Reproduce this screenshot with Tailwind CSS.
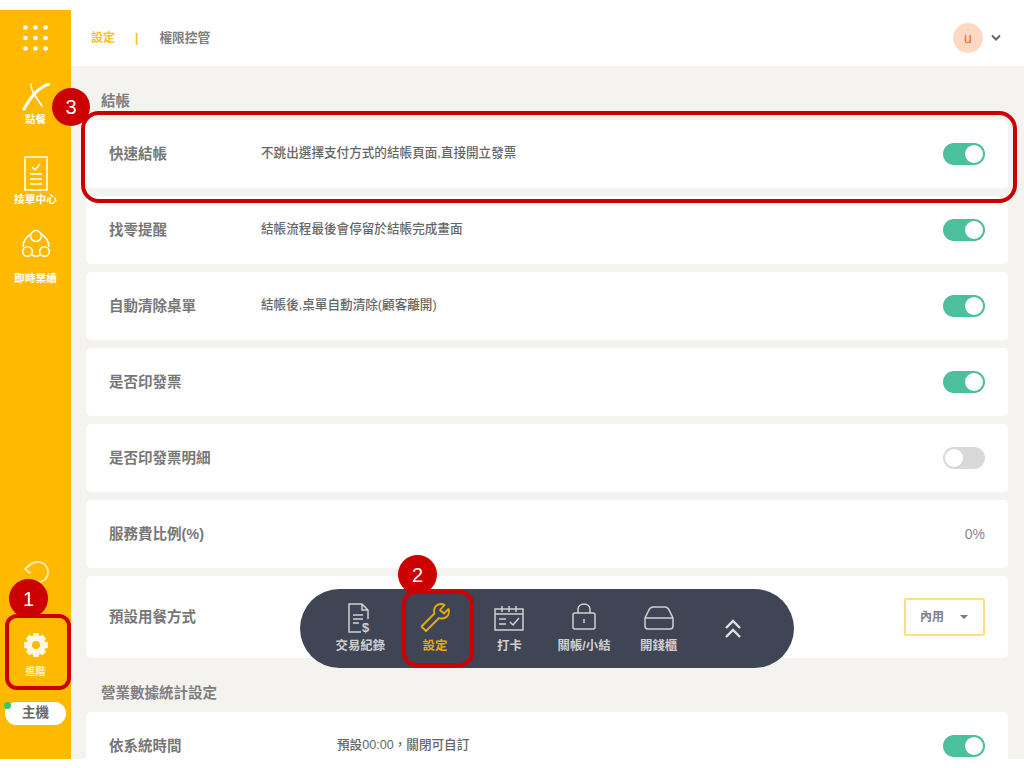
<!DOCTYPE html>
<html lang="zh-Hant">
<head>
    <meta charset="UTF-8">
    <meta name="viewport" content="width=device-width, initial-scale=1.0">
    <title>權限控管</title>
    <script src="https://cdn.jsdelivr.net/npm/@tailwindcss/browser@4"></script>
</head>
<body class="bg-white font-['Liberation_Sans','Noto_Sans_CJK_TC',sans-serif]">
<div class="relative w-[1024px] h-[768px] overflow-hidden bg-white pt-[10px]">
    <div class="flex h-[749px]">
        <!-- Sidebar -->
        <aside class="w-[71px] h-full bg-[#ffba00] flex flex-col items-center text-white shrink-0">
            <svg class="mt-[15px] w-[25px] h-[26px]" viewBox="0 0 25 26" fill="#fff">
                <circle cx="2.500" cy="2.500" r="2.300"/><circle cx="12.500" cy="2.500" r="2.300"/><circle cx="22.500" cy="2.500" r="2.300"/>
                <circle cx="2.500" cy="13" r="2.300"/><circle cx="12.500" cy="13" r="2.300"/><circle cx="22.500" cy="13" r="2.300"/>
                <circle cx="2.500" cy="23.500" r="2.300"/><circle cx="12.500" cy="23.500" r="2.300"/><circle cx="22.500" cy="23.500" r="2.300"/>
            </svg>
            <svg class="mt-[32px] w-[28px] h-[28px]" viewBox="0 0 28 28" fill="none" stroke="#fff" stroke-linecap="round">
                <path d="M27 1C17 4 8 15 2 26" stroke-width="3"/>
                <path d="M9 1c0 6 2 8 3 10l8 12" stroke-width="1.600"/>
            </svg>
            <span class="text-[10.500px] font-bold leading-[12px] mt-[2px]">點餐</span>
            <svg class="mt-[31px] w-[24px] h-[35px]" viewBox="0 0 24 35" fill="none" stroke="#fff" stroke-width="1.500">
                <rect x="1" y="1" width="22" height="33"/>
                <path d="M8 11l3 3 5-6M6 18h12M6 23h12M6 28h12"/>
            </svg>
            <span class="text-[10.750px] font-bold leading-[12px] mt-[2px] whitespace-nowrap">接單中心</span>
            <svg class="mt-[24px] w-[30px] h-[30px]" viewBox="0 0 30 30" fill="none" stroke="#fff" stroke-width="1.500">
                <circle cx="15" cy="7" r="5.500"/><circle cx="6.500" cy="22.500" r="4.800"/><circle cx="23.500" cy="22.500" r="4.800"/>
                <path d="M10 5C5 8 2 12 2 18M20 5c5 3 8 7 8 13M11 26c2.500 1.500 5.500 1.500 8 0"/>
            </svg>
            <span class="text-[10.750px] font-bold leading-[12px] mt-[13px] whitespace-nowrap">即時業績</span>
            <svg class="mt-[276px] w-[26px] h-[24px] opacity-70" viewBox="0 0 26 24" fill="none" stroke="#fff" stroke-width="1.800" stroke-linecap="round" stroke-linejoin="round">
                <path d="M7 5L2 9l5 4M5 6C8 3.500 11 2 15 2A10 10 0 1 1 9 20"/>
            </svg>
            <svg class="mt-[49px] w-[24px] h-[24px]" viewBox="0 0 24 24" fill="#fff8e6">
                <path fill-rule="evenodd" d="M9.500 0h5l1 3.500 3-1.700 3.500 3.500-1.700 3 3.700 1v5.400l-3.700 1 1.700 3-3.500 3.500-3-1.700-1 3.500h-5l-1-3.500-3 1.700-3.500-3.500 1.700-3L0 14.700V9.300l3.700-1-1.700-3 3.500-3.500 3 1.700zM12 8a4 4 0 1 0 0 8 4 4 0 0 0 0-8z"/>
            </svg>
            <span class="text-[10px] font-bold leading-[12px] mt-[9px] text-[#fff3d0]">進階</span>
            <div class="mt-[24px] w-[61px] h-[23px] bg-white rounded-full flex items-center justify-center text-[13.500px] font-bold text-[#666]">主機</div>
        </aside>

        <div class="flex-1 min-w-0 bg-[#f4f3f0]">
            <!-- Header -->
            <header class="h-[56px] bg-white flex items-center pl-[20px] pr-[22px] text-[12px] font-bold">
                <span class="text-[#fcbd1c]">設定</span>
                <span class="text-[#fcbd1c] ml-[20px]">|</span>
                <span class="text-[#808080] ml-[21px] text-[12.750px]">權限控管</span>
                <div class="ml-auto flex items-center gap-[7px]">
                    <div class="w-[30px] h-[30px] rounded-full bg-[#ffd8c2] text-[#f0622a] text-[14px] font-normal flex items-center justify-center">u</div>
                    <svg class="w-[12px] h-[8px]" viewBox="0 0 12 8" fill="none" stroke="#666" stroke-width="2"><path d="M2 1.500l4 4 4-4"/></svg>
                </div>
            </header>

            <main class="pl-[15px] pr-[16px]">
                <h2 class="pl-[15px] pt-[26px] h-[54px] text-[14.500px] font-bold leading-[18px] text-[#808080]">結帳</h2>
                <div class="flex flex-col gap-[8px]">
                    <div class="h-[68px] bg-white rounded-[5px] flex items-center pl-[23px] pr-[23px]">
                        <span class="w-[152px] pt-[2px] text-[14.500px] font-bold text-[#777] shrink-0">快速結帳</span>
                        <span class="pb-[2px] text-[12.600px] font-medium text-[#666]">不跳出選擇支付方式的結帳頁面,直接開立發票</span>
                        <span class="ml-auto w-[42px] h-[22px] rounded-full bg-[#4cc09d] flex justify-end items-center p-[2px]"><span class="w-[18px] h-[18px] rounded-full bg-white"></span></span>
                    </div>
                    <div class="h-[68px] bg-white rounded-[5px] flex items-center pl-[23px] pr-[23px]">
                        <span class="w-[152px] pt-[2px] text-[14.500px] font-bold text-[#777] shrink-0">找零提醒</span>
                        <span class="pb-[2px] text-[12.600px] font-medium text-[#666]">結帳流程最後會停留於結帳完成畫面</span>
                        <span class="ml-auto w-[42px] h-[22px] rounded-full bg-[#4cc09d] flex justify-end items-center p-[2px]"><span class="w-[18px] h-[18px] rounded-full bg-white"></span></span>
                    </div>
                    <div class="h-[68px] bg-white rounded-[5px] flex items-center pl-[23px] pr-[23px]">
                        <span class="w-[152px] pt-[2px] text-[14.500px] font-bold text-[#777] shrink-0">自動清除桌單</span>
                        <span class="pb-[2px] text-[12.600px] font-medium text-[#666]">結帳後,桌單自動清除(顧客離開)</span>
                        <span class="ml-auto w-[42px] h-[22px] rounded-full bg-[#4cc09d] flex justify-end items-center p-[2px]"><span class="w-[18px] h-[18px] rounded-full bg-white"></span></span>
                    </div>
                    <div class="h-[68px] bg-white rounded-[5px] flex items-center pl-[23px] pr-[23px]">
                        <span class="w-[152px] pt-[2px] text-[14.500px] font-bold text-[#777] shrink-0">是否印發票</span>
                        <span class="ml-auto w-[42px] h-[22px] rounded-full bg-[#4cc09d] flex justify-end items-center p-[2px]"><span class="w-[18px] h-[18px] rounded-full bg-white"></span></span>
                    </div>
                    <div class="h-[68px] bg-white rounded-[5px] flex items-center pl-[23px] pr-[23px]">
                        <span class="w-[152px] pt-[2px] text-[14.500px] font-bold text-[#777] shrink-0">是否印發票明細</span>
                        <span class="ml-auto w-[42px] h-[22px] rounded-full bg-[#d9d9d9] flex items-center p-[2px]"><span class="w-[18px] h-[18px] rounded-full bg-white"></span></span>
                    </div>
                    <div class="h-[68px] bg-white rounded-[5px] flex items-center pl-[23px] pr-[23px]">
                        <span class="pt-[2px] text-[14.500px] font-bold text-[#777]">服務費比例(%)</span>
                        <span class="ml-auto text-[14px] font-medium text-[#888]">0%</span>
                    </div>
                    <div class="h-[82px] bg-white rounded-[5px] flex items-center pl-[23px] pr-[23px]">
                        <span class="pt-[2px] text-[14.500px] font-bold text-[#777]">預設用餐方式</span>
                        <span class="ml-auto w-[81px] h-[38px] border-2 border-[#ffdf80] rounded-[2px] flex items-center pl-[14px] text-[12px] font-bold text-[#808080]">
                            內用
                            <svg class="ml-[16px] w-[8px] h-[4px]" viewBox="0 0 8 4" fill="#777"><path d="M0 0h8L4 4z"/></svg>
                        </span>
                    </div>
                </div>
                <h2 class="pl-[15px] pt-[26px] h-[54px] text-[14.500px] font-bold leading-[18px] text-[#808080]">營業數據統計設定</h2>
                <div class="h-[68px] bg-white rounded-[5px] flex items-center pl-[23px] pr-[23px]">
                    <span class="w-[228px] pt-[2px] text-[14.500px] font-bold text-[#777] shrink-0">依系統時間</span>
                    <span class="pb-[2px] text-[12.600px] font-medium text-[#666]">預設00:00，關閉可自訂</span>
                    <span class="ml-auto w-[42px] h-[22px] rounded-full bg-[#4cc09d] flex justify-end items-center p-[2px]"><span class="w-[18px] h-[18px] rounded-full bg-white"></span></span>
                </div>
            </main>
        </div>
    </div>

    <!-- Floating toolbar -->
    <div class="absolute left-[300px] top-[589px] w-[494px] h-[79px] rounded-full bg-[#3f4555] flex items-center pl-[23px] pb-[2px] text-[#cfcfcf] text-[12.400px] font-bold leading-[14px]">
        <div class="w-[74.600px] h-[50px] flex flex-col items-center justify-between">
            <svg class="w-[26px] h-[32px]" viewBox="0 0 26 32" fill="none" stroke="#d0d0d0" stroke-width="1.500">
                <path d="M14 29H2V1h13l6 6v9M15 1v6h6M6 12h10M6 16h10M6 20h6"/>
                <text x="15" y="29" font-size="13" fill="#d0d0d0" stroke="none" font-weight="bold">$</text>
            </svg>
            <span class="whitespace-nowrap">交易紀錄</span>
        </div>
        <div class="w-[74.600px] h-[50px] flex flex-col items-center justify-between text-[#e6ac0c]">
            <svg class="w-[30px] h-[30px]" viewBox="0 0 30 30" fill="none" stroke="#e6ac0c" stroke-width="1.800" stroke-linejoin="round">
                <path d="M21 1c-4 0-7 3-7 7 0 1 .2 2 .5 2.500L1.500 23.500 6 28l13-13c1 .4 2 .5 3 .5 4 0 7-3 7-7 0-1 0-1.500-.5-2.500L24 10.500 20 7l4.500-5c-1-.7-2-1-3.500-1z"/>
            </svg>
            <span>設定</span>
        </div>
        <div class="w-[74.600px] h-[50px] flex flex-col items-center justify-between">
            <svg class="w-[30px] h-[26px] mt-[2px]" viewBox="0 0 30 26" fill="none" stroke="#d0d0d0" stroke-width="1.500">
                <path d="M1 4h28v21H1zM1 9h28M8 1v6M15 1v6M22 1v6M5 14h7M5 19h7M16 17l3 3 6-7"/>
            </svg>
            <span>打卡</span>
        </div>
        <div class="w-[74.600px] h-[50px] flex flex-col items-center justify-between">
            <svg class="w-[24px] h-[27px]" viewBox="0 0 24 27" fill="none" stroke="#d0d0d0" stroke-width="1.500">
                <rect x="1" y="10" width="22" height="16" rx="2"/><path d="M6 10V6a6 5 0 0 1 12 0v4M12 16v4"/>
            </svg>
            <span class="whitespace-nowrap">關帳/小結</span>
        </div>
        <div class="w-[74.600px] h-[50px] flex flex-col items-center justify-between">
            <svg class="w-[30px] h-[25px] mt-[3px]" viewBox="0 0 30 25" fill="none" stroke="#d0d0d0" stroke-width="1.500">
                <path d="M9 1h12c1.500 0 2.500.5 3.500 2L29 12v8a3 3 0 0 1-3 3H4a3 3 0 0 1-3-3v-8l4.500-9C6.500 1.500 7.500 1 9 1zM1 12h28"/>
            </svg>
            <span class="whitespace-nowrap">開錢櫃</span>
        </div>
        <div class="w-[74.600px] flex justify-center mt-[2px]">
            <svg class="w-[18px] h-[20px]" viewBox="0 0 18 20" fill="none" stroke="#e0e0e0" stroke-width="2.400">
                <path d="M2 9l7-7 7 7M2 18l7-7 7 7"/>
            </svg>
        </div>
    </div>

    <!-- Annotations -->
    <div class="absolute left-[81px] top-[111px] w-[936px] h-[92px] border-[4px] border-[#cc0000] rounded-[18px]"></div>
    <div class="absolute left-[402px] top-[590px] w-[72px] h-[77px] border-[4px] border-[#cc0000] rounded-[14px]"></div>
    <div class="absolute left-[5px] top-[614px] w-[66px] h-[76px] border-[4px] border-[#cc0000] rounded-[12px]"></div>
    <div class="absolute left-[52px] top-[88px] w-[38px] h-[38px] rounded-full bg-[#cc0000] text-white text-[20px] flex items-center justify-center">3</div>
    <div class="absolute left-[398px] top-[555px] w-[39px] h-[39px] rounded-full bg-[#cc0000] text-white text-[20px] flex items-center justify-center">2</div>
    <div class="absolute left-[9px] top-[579px] w-[39px] h-[39px] rounded-full bg-[#cc0000] text-white text-[20px] flex items-center justify-center">1</div>
    <div class="absolute left-[4px] top-[702px] w-[7px] h-[7px] rounded-full bg-[#2ecc71]"></div>
</div>
</body>
</html>
